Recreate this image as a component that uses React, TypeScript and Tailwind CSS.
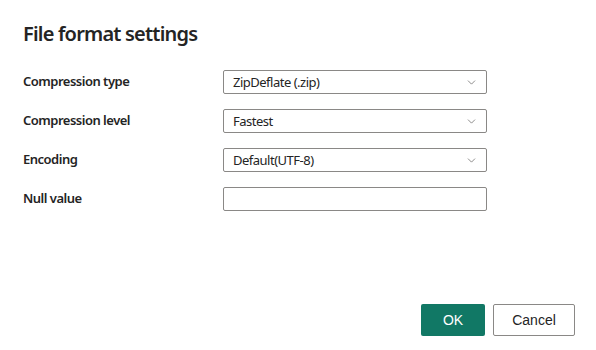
import { ChevronDown } from "lucide-react";

const rows = [
  { label: "Compression type", value: "ZipDeflate (.zip)", select: true },
  { label: "Compression level", value: "Fastest", select: true },
  { label: "Encoding", value: "Default(UTF-8)", select: true },
  { label: "Null value", value: "", select: false },
];

const App = () => {
  return (
    <div className="w-[596px] h-[350px] bg-white flex flex-col font-['Noto_Sans',sans-serif] text-[#242424]">
      <h1 className="mt-[20px] px-[23px] text-[20px] leading-[28px] font-semibold tracking-[-0.8px]">
        File format settings
      </h1>

      <div className="mt-[22px] px-[23px] flex flex-col gap-[15px]">
        {rows.map((row) => (
          <div key={row.label} className="flex items-center">
            <label className="w-[200px] text-[13px] font-semibold tracking-[-0.5px]">{row.label}</label>
            <div className="w-[264px] h-[24px] border border-[#8a8886] rounded-[2px] flex items-center justify-between pl-[9px] pr-[8px]">
              <span className="text-[13px] leading-none tracking-[-0.5px]">{row.value}</span>
              {row.select && <ChevronDown className="h-[13px] w-[13px] text-[#605e5c]" strokeWidth={1.3} />}
            </div>
          </div>
        ))}
      </div>

      <div className="mt-auto mb-[14px] pr-[21px] flex justify-end gap-[8px]">
        <button className="w-[64px] h-[32px] rounded-[2px] bg-[#117865] text-white text-[14px] font-['Liberation_Sans',sans-serif]">
          OK
        </button>
        <button className="w-[82px] h-[32px] rounded-[2px] border border-[#8a8886] bg-white text-[14px] text-[#242424] font-['Liberation_Sans',sans-serif]">
          Cancel
        </button>
      </div>
    </div>
  );
};

export default App;
